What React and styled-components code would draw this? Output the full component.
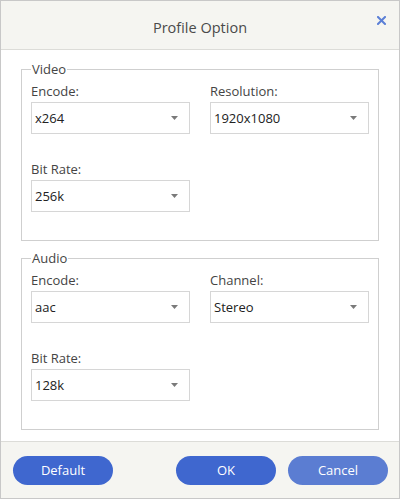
import React from "react";
import styled, { createGlobalStyle } from "styled-components";

const GlobalStyle = createGlobalStyle`
  html, body {
    margin: 0;
    padding: 0;
    background: #ffffff;
  }
  * {
    box-sizing: border-box;
  }
`;

const Dialog = styled.div`
  width: 400px;
  height: 499px;
  border: 1px solid #c8c8c8;
  display: flex;
  flex-direction: column;
  font-family: "Open Sans", "Noto Sans", sans-serif;
  color: #333;
  background: #fff;
`;

const Header = styled.div`
  position: relative;
  height: 49px;
  flex: none;
  background: #f5f5f1;
  border-bottom: 1px solid #dcdcd8;
  display: flex;
  align-items: center;
  justify-content: center;
  padding-top: 4px;
`;

const Title = styled.h1`
  margin: 0;
  font-size: 14.5px;
  font-weight: 400;
  color: #4a4a4a;
`;

const Close = styled.button`
  position: absolute;
  top: 12px;
  right: 11px;
  width: 14px;
  height: 14px;
  padding: 0;
  border: 0;
  background: none;
  cursor: pointer;
  display: flex;
  align-items: center;
  justify-content: center;
`;

const Body = styled.div`
  flex: 1;
  padding: 11px 20px;
  display: flex;
  flex-direction: column;
  gap: 9px;
`;

const Group = styled.fieldset`
  margin: 0;
  padding: 6px 9px 28px;
  border: 1px solid #cfcfcf;
  min-width: 0;
`;

const Legend = styled.legend`
  margin-left: 0;
  padding: 0 1px;
  font-size: 13px;
  line-height: 16px;
  color: #444;
`;

const Grid = styled.div`
  display: grid;
  grid-template-columns: 159px 159px;
  column-gap: 20px;
  row-gap: 27px;
`;

const Field = styled.div`
  display: flex;
  flex-direction: column;
  gap: 3px;
`;

const Label = styled.label`
  font-size: 13px;
  line-height: 16px;
  color: #444;
`;

const Select = styled.div`
  height: 32px;
  border: 1px solid #d6d6d6;
  background: #fff;
  display: flex;
  align-items: center;
  justify-content: space-between;
  padding: 0 11px 0 3px;
  font-size: 13px;
  color: #222;
  cursor: pointer;
`;

const Footer = styled.div`
  flex: none;
  height: 57px;
  background: #f5f5f1;
  border-top: 1px solid #dcdcd8;
  display: flex;
  align-items: center;
  justify-content: space-between;
  padding: 0 11px 0 12px;
`;

const Actions = styled.div`
  display: flex;
  gap: 12px;
`;

const Button = styled.button`
  width: 100px;
  height: 29px;
  border: 0;
  border-radius: 15px;
  background: ${(p) => (p.$muted ? "#5b7dd2" : "#3f67cf")};
  color: #fff;
  font-family: "Open Sans", "Noto Sans", sans-serif;
  font-size: 13px;
  cursor: pointer;
`;

function Arrow() {
  return (
    <svg width="7" height="4" viewBox="0 0 7 4">
      <path d="M0 0 H7 L3.5 4 Z" fill="#7a7a7a" />
    </svg>
  );
}

function Dropdown({ label, value }) {
  return (
    <Field>
      <Label>{label}</Label>
      <Select>
        <span>{value}</span>
        <Arrow />
      </Select>
    </Field>
  );
}

export default function App() {
  return (
    <>
      <GlobalStyle />
      <Dialog>
        <Header>
          <Title>Profile Option</Title>
          <Close aria-label="close">
            <svg width="9" height="9" viewBox="0 0 9 9">
              <path
                d="M1 1 L8 8 M8 1 L1 8"
                stroke="#5b7fd6"
                strokeWidth="2"
                strokeLinecap="square"
              />
            </svg>
          </Close>
        </Header>
        <Body>
          <Group>
            <Legend>Video</Legend>
            <Grid>
              <Dropdown label="Encode:" value="x264" />
              <Dropdown label="Resolution:" value="1920x1080" />
              <Dropdown label="Bit Rate:" value="256k" />
            </Grid>
          </Group>
          <Group>
            <Legend>Audio</Legend>
            <Grid>
              <Dropdown label="Encode:" value="aac" />
              <Dropdown label="Channel:" value="Stereo" />
              <Dropdown label="Bit Rate:" value="128k" />
            </Grid>
          </Group>
        </Body>
        <Footer>
          <Button>Default</Button>
          <Actions>
            <Button>OK</Button>
            <Button $muted>Cancel</Button>
          </Actions>
        </Footer>
      </Dialog>
    </>
  );
}
